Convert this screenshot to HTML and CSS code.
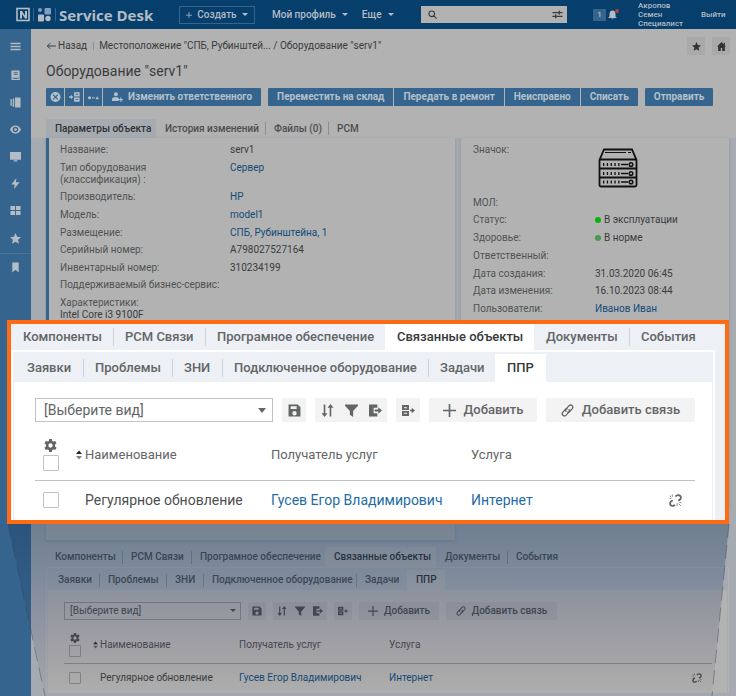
FILE: index.html
```html
<!DOCTYPE html>
<html lang="ru">
<head>
<meta charset="utf-8">
<title>Service Desk</title>
<link rel="stylesheet" href="styles.css">
</head>
<body>
<svg class="sprite" aria-hidden="true">
  <symbol id="i-back" viewBox="0 0 24 20"><path d="M24 10H3M10 3l-7 7 7 7" fill="none" stroke="currentColor" stroke-width="2.500"/></symbol>
  <symbol id="i-menu" viewBox="0 0 24 24"><path d="M1 4h22v3H1zM1 10.500h22v3H1zM1 17h22v3H1z"/></symbol>
  <symbol id="i-doc" viewBox="0 0 24 24"><path fill-rule="evenodd" d="M4 1h17v17l1 4H5a2 2 0 0 1-2-2V2zM8 5v2h9V5zM8 9v2h9V9zM6 17v2h13v-2z"/></symbol>
  <symbol id="i-cols" viewBox="0 0 24 24"><path d="M11 1h12v22H11zM6 3h3v18H6zM1 5h3v14H1z"/></symbol>
  <symbol id="i-eye" viewBox="0 0 24 24"><path fill-rule="evenodd" d="M12 3C6 3 2 7 0 12c2 5 6 9 12 9s10-4 12-9c-2-5-6-9-12-9zm0 3a6 6 0 1 1 0 12 6 6 0 0 1 0-12zm0 3a3 3 0 1 0 0 6 3 3 0 0 0 0-6z"/></symbol>
  <symbol id="i-screen" viewBox="0 0 24 24"><path d="M0 2h24v17H0zM8 20h8v3H8z"/></symbol>
  <symbol id="i-bolt" viewBox="0 0 24 24"><path d="M14 0 3 14h7l-1 10 12-15h-8z"/></symbol>
  <symbol id="i-grid" viewBox="0 0 24 24"><path d="M1 2h10v9H1zM13 2h10v9H13zM1 13h10v9H1zM13 13h10v9H13z"/></symbol>
  <symbol id="i-star" viewBox="0 0 24 24"><path d="m12 0 3.500 8 8.500 1-6.500 5.500 2 9L12 19l-7.500 4.500 2-9L0 9l8.500-1z"/></symbol>
  <symbol id="i-mark" viewBox="0 0 24 24"><path d="M5 1h14v22l-7-6-7 6z"/></symbol>
  <symbol id="i-home" viewBox="0 0 24 24"><path d="M12 0 0 12h3v12h7v-8h4v8h7V12h3l-3-3V2h-3v4z"/></symbol>
  <symbol id="i-search" viewBox="0 0 24 24"><path d="M10 2.500a7.500 7.500 0 1 0 0 15 7.500 7.500 0 0 0 0-15zM15 15l8 8" fill="none" stroke="currentColor" stroke-width="3"/></symbol>
  <symbol id="i-tune" viewBox="0 0 24 18"><path d="M1 5h22M1 13h22M16 1v8M8 9v8" fill="none" stroke="currentColor" stroke-width="3"/></symbol>
  <symbol id="i-bell" viewBox="0 0 24 24"><path d="M12 0c-5 0-8 4-8 9v7l-4 4h24l-4-4V9c0-5-3-9-8-9zM9 21h6l-3 3z"/></symbol>
  <symbol id="i-cross" viewBox="0 0 24 24"><path fill-rule="evenodd" d="M12 0a12 12 0 1 0 0 24 12 12 0 0 0 0-24zM7.500 5.500 12 10l4.500-4.500 2 2L14 12l4.500 4.500-2 2L12 14l-4.500 4.500-2-2L10 12 5.500 7.500z"/></symbol>
  <symbol id="i-into" viewBox="0 0 28 24"><path fill-rule="evenodd" d="M0 10h5V6l6 6-6 6v-4H0zM13 0h14v11H13zM17 4v2h6V4zM13 13h14v11H13zM17 17v2h6v-2z"/></symbol>
  <symbol id="i-path" viewBox="0 0 28 24"><path d="M0 14a4 4 0 1 1 8 0 4 4 0 0 1-8 0zM10 12.500h3v3h-3zM14.500 11l3.500 3-3.500 3zM19 18l4.500-8 4.500 8z"/></symbol>
  <symbol id="i-person" viewBox="0 0 28 24"><path d="M10 0a5 5 0 1 1 0 10 5 5 0 0 1 0-10zM0 22v-5c0-3 4-5 10-5 3 0 5 1 7 2v8zM21 13h3v4h4v3h-4v4h-3v-4h-4v-3h4z"/></symbol>
  <symbol id="i-save" viewBox="0 0 24 24"><path fill-rule="evenodd" d="M1 1h17l5 5v17H1zM5 4v5h11V4zM12 13a4 4 0 1 0 0 8 4 4 0 0 0 0-8z"/></symbol>
  <symbol id="i-sort" viewBox="0 0 24 24"><path d="M5 1h3v16h4l-5.500 7L1 17h4zM16 23h3V7h4l-5.500-7L12 7h4z"/></symbol>
  <symbol id="i-filter" viewBox="0 0 24 24"><path d="M0 1h24v2l-9 10v11l-6-4v-7L0 3z"/></symbol>
  <symbol id="i-export" viewBox="0 0 28 26"><path d="M0 0h18v7h-8v12h8v7H0z"/><path d="M12 11h8V6l8 7-8 7v-5h-8z"/></symbol>
  <symbol id="i-move" viewBox="0 0 28 24"><path fill-rule="evenodd" d="M0 0h15v11H0zM4 5v2h7V5zM0 13h15v11H0zM4 17v2h7v-2zM17 10.500h4V6l7 6-7 6v-4.500h-4z"/></symbol>
  <symbol id="i-plus" viewBox="0 0 24 24"><path d="M10.500 0h3v10.500H24v3H13.500V24h-3V13.500H0v-3h10.500z"/></symbol>
  <symbol id="i-link" viewBox="0 0 24 24"><g fill="none" stroke="currentColor" stroke-width="2.500" stroke-linecap="round"><path d="M9 13.500c-1-2-.5-3.500.5-4.500l5-5.500c2-2 4.500-2 6-.5s1.500 4 0 6L16 14c-1 1-2 1.500-3.500 1"/><path d="M15 10.500c1 2 .5 3.500-.5 4.500l-5 5.500c-2 2-4.500 2-6 .5s-1.500-4 0-6L8 10c1-1 2-1.500 3.500-1"/></g></symbol>
  <symbol id="i-unlink" viewBox="0 0 24 24"><g fill="none" stroke="currentColor"><path stroke-width="3.200" d="M12 5c1-2 3-3 5-3 3 0 5 2 5 5 0 2-2 4-5 5M11 20c-1 1-2 2-4 2-3 0-5-2-5-4 0-3 1-5 5-6"/><path stroke-width="1.800" opacity=".8" d="M1 3l3 3M6 1v4M1 8h3M15 17v5M18 18l4 4M19 16h4"/></g></symbol>
  <symbol id="i-gear" viewBox="0 0 24 24"><path fill-rule="evenodd" d="M9.500 0h5l.6 3.500 2.200 1.300 3.400-1.300 2.500 4.300-2.800 2.300v3.800l2.800 2.300-2.500 4.300-3.400-1.300-2.200 1.300-.6 3.500h-5l-.6-3.500-2.200-1.300-3.400 1.300L.8 16.200l2.800-2.300v-3.800L.8 7.800l2.500-4.300 3.400 1.300 2.200-1.300zM12 8a4 4 0 1 0 0 8 4 4 0 0 0 0-8z"/></symbol>
  <symbol id="i-order" viewBox="0 0 12 20"><path fill="#222" d="M0 8 6 1l6 7z"/><path opacity=".8" d="M0 12l6 7 6-7z"/></symbol>
</svg>

<header class="top">
  <a class="brand" href="#">
    <svg class="logo" viewBox="0 0 40 16" aria-hidden="true">
      <rect x="1" y="1.500" width="12" height="12" fill="none" stroke="currentColor" stroke-width="1.600"/>
      <path d="M4 11.500V4h2l3 4.500V4h2v7.500H9L6 7v4.500z" fill="currentColor"/>
      <path d="M17.500 1v13M39.500 1v13" stroke="#35658e"/>
      <rect x="22" y="7.500" width="6" height="7" rx="1" fill="currentColor"/><rect x="28.500" y="1" width="6.500" height="6.500" rx="1" fill="#7fa0bd"/><circle cx="24" cy="3" r="2" fill="#7fa0bd"/><circle cx="32" cy="11.500" r="2.700" fill="currentColor"/>
    </svg>
    <span>Service Desk</span>
  </a>
  <button class="create" type="button"><svg><use href="#i-plus"/></svg>Создать<i class="caret"></i></button>
  <button class="menu" type="button">Мой профиль<i class="caret"></i></button>
  <button class="menu" type="button">Еще<i class="caret"></i></button>
  <div class="search"><svg><use href="#i-search"/></svg><input type="search" aria-label="Поиск"><svg class="tune"><use href="#i-tune"/></svg></div>
  <div class="alerts"><span class="count">1</span><svg><use href="#i-bell"/></svg><i class="dot"></i></div>
  <a class="user" href="#">Акропов<br>Семен<br>Специалист</a>
  <a class="exit" href="#">Выйти</a>
</header>

<div class="shell">
  <nav class="side" aria-label="Разделы">
    <a class="first" href="#" aria-label="Меню"><svg><use href="#i-menu"/></svg></a>
    <a href="#" aria-label="Документы"><svg><use href="#i-doc"/></svg></a>
    <a href="#" aria-label="Списки"><svg><use href="#i-cols"/></svg></a>
    <a href="#" aria-label="Обзор"><svg><use href="#i-eye"/></svg></a>
    <a href="#" aria-label="Экран"><svg><use href="#i-screen"/></svg></a>
    <a href="#" aria-label="События"><svg><use href="#i-bolt"/></svg></a>
    <a href="#" aria-label="Плитка"><svg><use href="#i-grid"/></svg></a>
    <a class="last" href="#" aria-label="Избранное"><svg><use href="#i-star"/></svg></a>
    <a href="#" aria-label="Закладки"><svg><use href="#i-mark"/></svg></a>
  </nav>

  <main>
    <div class="head">
      <div class="crumbs">
        <a class="back" href="#"><svg><use href="#i-back"/></svg>Назад</a><i></i><a href="#">Местоположение "СПБ, Рубинштей...</a><b>&nbsp;/ Оборудование "serv1"</b>
        <button class="square push" type="button" aria-label="В избранное"><svg><use href="#i-star"/></svg></button>
        <button class="square" type="button" aria-label="Домой"><svg><use href="#i-home"/></svg></button>
      </div>
      <h1>Оборудование "serv1"</h1>
      <div class="actions">
        <div class="group">
          <button class="mini" type="button" aria-label="Закрыть"><svg><use href="#i-cross"/></svg></button>
          <button class="mini" type="button" aria-label="Перенести"><svg><use href="#i-into"/></svg></button>
          <button class="mini" type="button" aria-label="Связи"><svg><use href="#i-path"/></svg></button>
          <button type="button"><svg><use href="#i-person"/></svg>Изменить ответственного</button>
        </div>
        <div class="group">
          <button type="button">Переместить на склад</button>
          <button type="button">Передать в ремонт</button>
          <button type="button">Неисправно</button>
          <button type="button">Списать</button>
        </div>
        <div class="group"><button type="button">Отправить</button></div>
      </div>
      <nav class="toptabs" aria-label="Карточка"><a class="on" href="#">Параметры объекта</a><a href="#">История изменений</a><a href="#">Файлы (0)</a><a href="#">РСМ</a></nav>
    </div>

    <div class="cards">
      <section class="card main-card">
        <dl>
          <div><dt>Название:</dt><dd>serv1</dd></div>
          <div><dt>Тип оборудования<br>(классификация) :</dt><dd><a href="#">Сервер</a></dd></div>
          <div><dt>Производитель:</dt><dd><a href="#">HP</a></dd></div>
          <div><dt>Модель:</dt><dd><a href="#">model1</a></dd></div>
          <div><dt>Размещение:</dt><dd><a href="#">СПБ, Рубинштейна, 1</a></dd></div>
          <div><dt>Серийный номер:</dt><dd>A798027527164</dd></div>
          <div><dt>Инвентарный номер:</dt><dd>310234199</dd></div>
          <div><dt>Поддерживаемый бизнес-сервис:</dt></div>
          <div class="stack"><dt>Характеристики:</dt><dd>Intel Core i3 9100F</dd></div>
        </dl>
      </section>
      <section class="card side-card">
        <dl>
          <div><dt>Значок:</dt><dd>
            <svg class="server" viewBox="0 0 40 40" aria-hidden="true">
              <g fill="none" stroke="#111" stroke-width="1.800"><path d="M1.500 12 6 1.500h28L38.500 12v25a1.500 1.500 0 0 1-1.500 1.500H3A1.500 1.500 0 0 1 1.500 37zM1 11.500h38M1.500 20.500h37M1.500 29.500h37"/><path d="M7 4.500h21M30 4.500h3" stroke-width="1.200"/><path d="M5 16.500h17M5 25.500h17M5 34h17" stroke-width="3" stroke-dasharray="1.300 2.500"/><path d="M23 16.500h7M23 25.500h7M23 34h7" stroke-width="1.500"/></g>
              <g fill="none" stroke="#111" stroke-width="1.500"><circle cx="33" cy="16.500" r="1.800"/><circle cx="33" cy="25.500" r="1.800"/><circle cx="33" cy="34" r="1.800"/></g>
            </svg></dd></div>
          <div><dt>МОЛ:</dt></div>
          <div><dt>Статус:</dt><dd><i class="led"></i>В эксплуатации</dd></div>
          <div><dt>Здоровье:</dt><dd><i class="led soft"></i>В норме</dd></div>
          <div><dt>Ответственный:</dt></div>
          <div><dt>Дата создания:</dt><dd>31.03.2020 06:45</dd></div>
          <div><dt>Дата изменения:</dt><dd>16.10.2023 08:44</dd></div>
          <div><dt>Пользователи:</dt><dd><a href="#">Иванов Иван</a></dd></div>
        </dl>
      </section>
    </div>

    <section class="related">
      <nav class="tabs outer" aria-label="Объект"><a href="#">Компоненты</a><a href="#">РСМ Связи</a><a href="#">Програмное обеспечение</a><a class="on" href="#">Связанные объекты</a><a href="#">Документы</a><a href="#">События</a></nav>
      <div class="pane">
        <nav class="tabs inner" aria-label="Связанные"><a href="#">Заявки</a><a href="#">Проблемы</a><a href="#">ЗНИ</a><a href="#">Подключенное оборудование</a><a href="#">Задачи</a><a class="on" href="#">ППР</a></nav>
        <div class="sheet">
          <div class="tools">
            <div class="pick"><select aria-label="Вид"><option>[Выберите вид]</option></select><i class="caret"></i></div>
            <button type="button" aria-label="Сохранить"><svg><use href="#i-save"/></svg></button>
            <div class="trio">
              <button type="button" aria-label="Сортировка"><svg><use href="#i-sort"/></svg></button>
              <button type="button" aria-label="Фильтр"><svg><use href="#i-filter"/></svg></button>
              <button type="button" aria-label="Экспорт"><svg><use href="#i-export"/></svg></button>
            </div>
            <button type="button" aria-label="Перенести"><svg><use href="#i-move"/></svg></button>
            <button class="add" type="button"><svg><use href="#i-plus"/></svg>Добавить</button>
            <button class="bind" type="button"><svg><use href="#i-link"/></svg>Добавить связь</button>
          </div>
          <table>
            <thead><tr><th class="c0"><svg><use href="#i-gear"/></svg><input type="checkbox" aria-label="Выбрать все"></th><th class="c1"><span><svg class="order"><use href="#i-order"/></svg>Наименование</span></th><th class="c2">Получатель услуг</th><th class="c3">Услуга</th><th class="c4"></th></tr></thead>
            <tbody><tr><td class="c0"><input type="checkbox" aria-label="Выбрать строку"></td><td class="c1">Регулярное обновление</td><td><a href="#">Гусев Егор Владимирович</a></td><td><a href="#">Интернет</a></td><td class="c4"><button class="drop" type="button" aria-label="Разорвать связь"><svg><use href="#i-unlink"/></svg></button></td></tr></tbody>
          </table>
        </div>
      </div>
    </section>
  </main>
</div>

<svg class="beam" viewBox="0 0 736 172" preserveAspectRatio="none" aria-hidden="true">
  <defs><linearGradient id="fade" x1="0" y1="0" x2="0" y2="1"><stop offset="0" stop-color="#1d395e" stop-opacity=".4"/><stop offset=".3" stop-color="#23436c" stop-opacity=".31"/><stop offset=".7" stop-color="#404060" stop-opacity=".16"/><stop offset="1" stop-color="#404040" stop-opacity=".03"/></linearGradient></defs>
  <path d="M8 0h721l-17 172H45z" fill="url(#fade)"/>
  <path d="M8 0l37 172M729 0l-17 172" fill="none" stroke="#303b48" stroke-opacity=".4" stroke-dasharray="14 7"/>
</svg>

<section class="related lens">
  <nav class="tabs outer" aria-label="Объект крупно"><a href="#">Компоненты</a><a href="#">РСМ Связи</a><a href="#">Програмное обеспечение</a><a class="on" href="#">Связанные объекты</a><a href="#">Документы</a><a href="#">События</a></nav>
  <div class="pane">
    <nav class="tabs inner" aria-label="Связанные крупно"><a href="#">Заявки</a><a href="#">Проблемы</a><a href="#">ЗНИ</a><a href="#">Подключенное оборудование</a><a href="#">Задачи</a><a class="on" href="#">ППР</a></nav>
    <div class="sheet">
      <div class="tools">
        <div class="pick"><select aria-label="Вид"><option>[Выберите вид]</option></select><i class="caret"></i></div>
        <button type="button" aria-label="Сохранить"><svg><use href="#i-save"/></svg></button>
        <div class="trio">
          <button type="button" aria-label="Сортировка"><svg><use href="#i-sort"/></svg></button>
          <button type="button" aria-label="Фильтр"><svg><use href="#i-filter"/></svg></button>
          <button type="button" aria-label="Экспорт"><svg><use href="#i-export"/></svg></button>
        </div>
        <button type="button" aria-label="Перенести"><svg><use href="#i-move"/></svg></button>
        <button class="add" type="button"><svg><use href="#i-plus"/></svg>Добавить</button>
        <button class="bind" type="button"><svg><use href="#i-link"/></svg>Добавить связь</button>
      </div>
      <table>
        <thead><tr><th class="c0"><svg><use href="#i-gear"/></svg><input type="checkbox" aria-label="Выбрать все"></th><th class="c1"><span><svg class="order"><use href="#i-order"/></svg>Наименование</span></th><th class="c2">Получатель услуг</th><th class="c3">Услуга</th><th class="c4"></th></tr></thead>
        <tbody><tr><td class="c0"><input type="checkbox" aria-label="Выбрать строку"></td><td class="c1">Регулярное обновление</td><td><a href="#">Гусев Егор Владимирович</a></td><td><a href="#">Интернет</a></td><td class="c4"><button class="drop" type="button" aria-label="Разорвать связь"><svg><use href="#i-unlink"/></svg></button></td></tr></tbody>
      </table>
    </div>
  </div>
</section>
</body>
</html>
```
FILE: styles.css
```css
* { box-sizing: border-box; }
html { height: 100%; }
body {
  position: relative;
  display: flex;
  flex-direction: column;
  min-height: 100%;
  margin: 0;
  overflow-x: hidden;
  background: #b2b2b2;
  color: #3a3c3e;
  font: 10px/12px Roboto, "Liberation Sans", sans-serif;
}
a { color: inherit; text-decoration: none; }
button { border: 0; padding: 0; background: none; color: inherit; font: inherit; white-space: nowrap; }
svg { display: block; flex: none; fill: currentColor; }
.sprite { position: absolute; width: 0; height: 0; }
.caret { flex: none; border: 3px solid transparent; border-top-color: currentColor; border-bottom: 0; }

/* Top bar */
.top { display: flex; align-items: center; height: 29px; padding-left: 16px; background: #063e6c; color: #b4bcc5; font-weight: 500; }
.top > * { flex-shrink: 0; }
.brand { display: flex; align-items: center; gap: 3px; width: 163px; font: 700 15px/20px "Open Sans", sans-serif; }
.logo { width: 40px; height: 16px; }
.create { display: flex; align-items: center; justify-content: center; gap: 5px; width: 76px; height: 18px; border: 1px solid #35658e; }
.create svg { width: 6px; height: 6px; }
.menu { display: flex; align-items: center; gap: 6px; margin-left: 17px; }
.menu + .menu { margin-left: 14px; }
.search { display: flex; align-items: center; width: 146px; height: 17px; margin-left: auto; padding: 0 4px 0 7px; background: #b2b2b2; color: #3a3c3e; }
.search svg { width: 9px; height: 9px; }
.search .tune { width: 11px; height: 9px; }
.search input { flex: 1; min-width: 0; height: 15px; border: 0; background: none; font: inherit; outline: 0; }
.alerts { position: relative; display: flex; align-items: center; gap: 2px; width: 24px; margin-left: 26px; }
.alerts svg { width: 9px; height: 10px; }
.count { width: 13px; background: #35658e; text-align: center; font-size: 8px; }
.dot { position: absolute; top: 0; right: -2px; width: 4px; height: 4px; border-radius: 50%; background: #b5423f; }
.user { width: 63px; margin-left: 21px; font-size: 8px; line-height: 9px; }
.exit { width: 35px; font-size: 8px; }

/* Frame */
.shell { display: flex; flex: 1; }
.side { flex: 0 0 31px; padding-top: 4px; background: #35658e; color: #b4bcc5; }
.side a { display: flex; align-items: center; justify-content: center; height: 27px; }
.side .first { margin-bottom: 2px; }
.side .last { height: 30px; border-bottom: 1px solid #4a7398; }
.side svg { width: 11px; height: 11px; }
main { flex: 1; min-width: 0; background: #a6abb2; }

/* Object heading */
.head { padding: 8px 6px 0 15px; background: #b2b2b2; }
.crumbs { display: flex; align-items: center; height: 18px; }
.back { display: flex; align-items: center; gap: 2px; }
.back svg { width: 10px; height: 8px; }
.crumbs i { width: 1px; height: 8px; margin: 0 5px 0 6px; background: #8f8f8f; }
.crumbs b { font-weight: 400; }
.push { margin-left: auto; margin-right: 7px; }
.square { display: grid; place-items: center; width: 18px; height: 18px; border-radius: 1px; background: #a9a9a9; color: #333; }
.square svg { width: 9px; height: 9px; }
h1 { margin: 6px 0 7px; font-size: 14px; font-weight: 400; line-height: 20px; }
.actions { display: flex; gap: 7px; padding-right: 15px; }
.group { display: flex; gap: 1px; border-radius: 1px; overflow: hidden; }
.group button { display: flex; align-items: center; justify-content: center; gap: 5px; height: 18px; padding: 0 9px; background: #35658e; color: #b4c0cb; font-weight: 700; }
.group .mini { width: 18px; padding: 0; }
.group svg { width: 11px; height: 10px; }
.toptabs { display: grid; grid-template-columns: 110px 109px 63px 1fr; margin-top: 13px; font-weight: 500; }
.toptabs a { display: flex; align-items: center; height: 19px; padding-left: 9px; color: #4c4e50; }
.toptabs a + a + a { background: linear-gradient(#8b8f93, #8b8f93) 0 50% / 1px 13px no-repeat; }
.toptabs .on { background: #a6abb2; color: #2e3032; }

/* Attribute cards */
.cards { display: grid; grid-template-columns: 409fr 268fr; align-items: start; gap: 6px; padding: 0 7px 0 15px; }
.card { background: #b2b2b2; box-shadow: 0 1px 3px #8d939b; }
.main-card { height: 402px; padding: 6px 14px; background: linear-gradient(#35658e, #35658e) 0 0 / 3px 360px no-repeat #b2b2b2; }
.side-card { height: 370px; padding: 6px 12px; }
dl { display: flex; flex-direction: column; justify-content: space-between; height: 177px; margin: 0; }
dl div { display: grid; grid-template-columns: 170px 1fr; }
dd { margin: 0; white-space: nowrap; }
dt { color: #505254; white-space: nowrap; }
dd a { color: #124a78; }
dl .stack { display: block; }
.side-card dl { height: 171px; }
.side-card dl div { grid-template-columns: 122px 1fr; }
.server { width: 40px; height: 40px; margin: 4px 0 3px 3px; }
.led { display: inline-block; width: 6px; height: 6px; margin-right: 3px; border-radius: 50%; background: #0ab30a; }
.soft { background: #459a55; }

/* Related objects */
.related {
  --outer: 76px 69px 134px 111px 71px 1fr;
  --inner: 50px 67px 37px 153px 51px 38px;
  --page: #a6abb2; --paper: #b2b2b2; --ink: #3a3c3e; --soft: #46484a; --strong: #2a2c2e; --link: #124a78; --btn: #a9a9ab; --line: #858788; --sep: #85898f;
  --unit: 18px; --icon: 10px; --pad: 9px;
  padding: 7px 7px 0 15px;
  color: var(--ink);
}
.tabs { display: grid; background: var(--page); color: var(--soft); font-weight: 500; }
.tabs a { display: flex; align-items: center; padding-left: var(--pad); white-space: nowrap; }
.outer { grid-template-columns: var(--outer); height: 20px; }
.inner { grid-template-columns: var(--inner); height: 22px; padding: 2px 0 0 2px; }
.tabs a:not(.on) + a:not(.on) { background: linear-gradient(var(--sep), var(--sep)) 0 50% / 1px 13px no-repeat; }
.tabs .on { background: var(--paper); color: var(--strong); }
.pane { border: 1px solid var(--paper); border-bottom: 0; }
.sheet { margin: 0 1px; padding: 12px 15px 0 16px; background: var(--paper); }
.tools { display: flex; gap: 7px; color: var(--soft); }
.tools button { display: flex; align-items: center; justify-content: center; width: var(--unit); height: var(--unit); background: var(--btn); border-radius: 1px; font-weight: 500; }
.tools svg { width: var(--icon); height: var(--icon); }
.trio { display: flex; }
.tools .add, .tools .bind { gap: 6px; }
.tools .add { width: 80px; }
.tools .bind { width: 111px; }
.pick { position: relative; flex: 0 0 177px; }
.pick select { appearance: none; width: 100%; height: var(--unit); padding: 0 5px; border: 1px solid var(--line); border-radius: 0; background: none; color: inherit; font: inherit; }
.pick .caret { position: absolute; right: 5px; top: 50%; margin-top: -2px; }
table { width: 100%; margin-top: 13px; border-collapse: collapse; table-layout: fixed; }
th, td { padding: 0; text-align: left; white-space: nowrap; font-weight: 400; }
th { padding-bottom: 5px; color: var(--soft); }
thead tr { height: 30px; border-bottom: 1px solid var(--line); }
tbody tr { height: 30px; }
.c0 { width: 36px; padding-left: 5px; }
.c0 svg { width: var(--icon); height: var(--icon); margin: 0 0 2px 1px; }
.c0 input { display: block; appearance: none; width: 12px; height: 12px; margin: 0; border: 1px solid var(--line); border-radius: 1px; }
th.c1 { width: 139px; }
th.c1 span { display: flex; align-items: center; margin-left: -7px; }
.order { width: 5px; height: 8px; margin-right: 2px; }
.c2 { width: 150px; }
.c4 { width: 20px; }
td a { color: var(--link); }
.drop { display: block; color: var(--soft); }
.drop svg { width: 10px; height: 10px; }

/* Light falling from the enlarged part to its source */
.beam { position: absolute; top: 524px; left: 0; width: 100%; height: 172px; pointer-events: none; }

/* Enlarged part */
.lens {
  --outer: 102px 92px 180px 149px 95px 1fr;
  --inner: 68px 89px 50px 206px 67px 51px;
  --page: #edf0f5; --paper: #fff; --ink: #4d4f51; --soft: #636567; --strong: #37393b; --link: #246ca4; --btn: #f3f3f3; --line: #bfc3c5; --sep: #ccd5da;
  --unit: 24px; --icon: 13px; --pad: 12px;
  position: absolute;
  top: 320px;
  left: 7px;
  right: 7px;
  padding: 0 10px 0 0;
  border: 4px solid #ff6a13;
  background: var(--page);
  font-size: 14px;
  line-height: 16px;
}
.lens .tabs { font-size: 13px; }
.lens .outer { height: 26px; }
.lens .inner { height: 30px; }
.lens .tabs a:not(.on) + a:not(.on) { background-size: 1px 18px; }
.lens .pane { border-width: 2px; border-bottom: 0; }
.lens .sheet { padding: 16px 17px 0 21px; }
.lens .tools { gap: 9px; }
.lens .pick { flex-basis: 238px; }
.lens .pick select { padding: 0 8px; }
.lens .pick .caret { right: 7px; border-width: 5px 4px 0; }
.lens .tools .add, .lens .tools .bind { gap: 8px; font-size: 13px; }
.lens .tools .add { width: 108px; }
.lens .tools .bind { width: 149px; }
.lens table { margin-top: 17px; }
.lens thead tr { height: 41px; }
.lens tbody tr { height: 40px; }
.lens .c0 { width: 50px; padding-left: 8px; }
.lens .c0 svg { margin-bottom: 3px; }
.lens .c0 input { width: 16px; height: 16px; }
.lens th { padding-bottom: 8px; font-size: 13px; }
.lens th.c1 { width: 186px; }
.lens th.c1 span { margin-left: -9px; }
.lens .order { width: 6px; height: 10px; margin-right: 3px; }
.lens .c2 { width: 200px; }
.lens .c4 { width: 26px; }
.lens .drop svg { width: 13px; height: 13px; }
```
